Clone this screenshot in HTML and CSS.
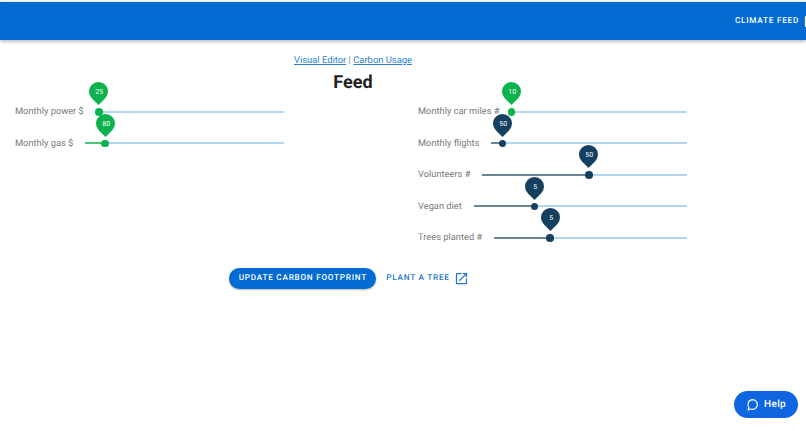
FILE: index.html
```html
<!DOCTYPE html>
<html lang="en">
<head>
    <meta charset="UTF-8">
    <meta name="viewport" content="width=device-width, initial-scale=1.0">
    <title>Feed</title>
    <link rel="stylesheet" href="styles.css">
</head>
<body>
    <header class="app-bar">
        <a class="app-link" href="#">
            Climate Feed
            <svg class="icon-open" viewBox="0 0 24 24"><path d="M19 19H5V5h7V3H5a2 2 0 0 0-2 2v14a2 2 0 0 0 2 2h14c1.1 0 2-.9 2-2v-7h-2v7zM14 3v2h3.59l-9.83 9.83 1.41 1.41L19 6.41V10h2V3h-7z"/></svg>
        </a>
    </header>
    <main class="page">
        <p class="nav-links"><a href="#">Visual Editor</a> | <a href="#">Carbon Usage</a></p>
        <h1 class="title">Feed</h1>
        <div class="columns">
            <div class="column">
                <div class="field">
                    <span class="field-label">Monthly power $</span>
                    <div class="slider green">
                        <div class="fill" style="width: 1.6%"></div>
                        <div class="thumb" style="left: 1.6%"><span class="pin"><span>25</span></span></div>
                    </div>
                </div>
                <div class="field">
                    <span class="field-label">Monthly gas $</span>
                    <div class="slider green">
                        <div class="fill" style="width: 10%"></div>
                        <div class="thumb" style="left: 10%"><span class="pin"><span>80</span></span></div>
                    </div>
                </div>
            </div>
            <div class="column">
                <div class="field">
                    <span class="field-label">Monthly car miles #</span>
                    <div class="slider green">
                        <div class="fill" style="width: 0%"></div>
                        <div class="thumb" style="left: 0%"><span class="pin"><span>10</span></span></div>
                    </div>
                </div>
                <div class="field">
                    <span class="field-label">Monthly flights</span>
                    <div class="slider">
                        <div class="fill" style="width: 5.6%"></div>
                        <div class="thumb" style="left: 5.6%"><span class="pin"><span>50</span></span></div>
                    </div>
                </div>
                <div class="field">
                    <span class="field-label">Volunteers #</span>
                    <div class="slider">
                        <div class="fill" style="width: 52%"></div>
                        <div class="thumb" style="left: 52%"><span class="pin"><span>50</span></span></div>
                    </div>
                </div>
                <div class="field">
                    <span class="field-label">Vegan diet</span>
                    <div class="slider">
                        <div class="fill" style="width: 28.5%"></div>
                        <div class="thumb" style="left: 28.5%"><span class="pin"><span>5</span></span></div>
                    </div>
                </div>
                <div class="field">
                    <span class="field-label">Trees planted #</span>
                    <div class="slider">
                        <div class="fill" style="width: 29%"></div>
                        <div class="thumb" style="left: 29%"><span class="pin"><span>5</span></span></div>
                    </div>
                </div>
            </div>
        </div>
        <div class="actions">
            <button type="button" class="btn-primary">Update Carbon Footprint</button>
            <a class="btn-text" href="#">
                Plant a Tree
                <svg class="icon-open" viewBox="0 0 24 24"><path d="M19 19H5V5h7V3H5a2 2 0 0 0-2 2v14a2 2 0 0 0 2 2h14c1.1 0 2-.9 2-2v-7h-2v7zM14 3v2h3.59l-9.83 9.83 1.41 1.41L19 6.41V10h2V3h-7z"/></svg>
            </a>
        </div>
    </main>
    <button type="button" class="help">
        <svg class="icon-help" viewBox="0 0 24 24"><path d="M12 3a9 9 0 0 1 0 18c-1.2 0-2.3-.2-3.3-.6L4 22l1.3-4.6A9 9 0 0 1 12 3z"/></svg>
        Help
    </button>
</body>
</html>
```

FILE: styles.css
```css
* {
    box-sizing: border-box;
}
html, body {
    height: 100%;
}
body {
    margin: 0;
    overflow: hidden;
    background: #fff;
    font-family: Roboto, "Liberation Sans", sans-serif;
    color: #7a7a7a;
    text-rendering: geometricPrecision;
}
a {
    color: #2a7fd4;
}
.app-bar {
    display: flex;
    justify-content: flex-end;
    align-items: center;
    height: 38px;
    margin-top: 2px;
    background: #036bd2;
    box-shadow: 0 1px 4px rgba(0, 0, 0, 0.35);
}
.app-link {
    display: flex;
    align-items: center;
    flex-shrink: 0;
    gap: 4px;
    margin-right: -12px;
    font-size: 8.2px;
    font-weight: 500;
    letter-spacing: 0.75px;
    text-transform: uppercase;
    text-decoration: none;
    color: #fff;
}
.icon-open {
    width: 15px;
    height: 15px;
    fill: currentColor;
}
.page {
    width: 706px;
}
.nav-links {
    margin: 14px 0 0;
    font-size: 9.4px;
    line-height: 13px;
    text-align: center;
}
.title {
    margin: 5px 0 0;
    font-size: 18px;
    line-height: 22px;
    font-weight: 700;
    text-align: center;
    color: #212121;
}
.columns {
    display: grid;
    grid-template-columns: 1fr 1fr;
    gap: 134px;
    margin-top: 2px;
    padding: 0 19px 0 15px;
}
.column {
    display: flex;
    flex-direction: column;
}
.field {
    display: flex;
    align-items: center;
    gap: 12px;
    height: 31.5px;
}
.field-label {
    font-size: 9.3px;
    white-space: nowrap;
}
.slider {
    position: relative;
    flex: 1;
    height: 2px;
    background: #b0d6f2;
}
.fill {
    height: 100%;
    background: #6a8598;
}
.thumb {
    position: absolute;
    top: 50%;
    width: 7.5px;
    height: 7.5px;
    margin: -3.75px 0 0 -3.75px;
    border-radius: 50%;
    background: #16405f;
}
.pin {
    position: absolute;
    left: 50%;
    bottom: 11px;
    display: flex;
    align-items: center;
    justify-content: center;
    width: 19px;
    height: 19px;
    margin-left: -9.5px;
    margin-bottom: 3.5px;
    border-radius: 50% 50% 50% 0;
    background: #16405f;
    transform: rotate(-45deg);
    font-size: 7px;
    color: #fff;
}
.pin span {
    transform: rotate(45deg);
}
.green .fill {
    background: #4cc57c;
}
.green .thumb, .green .pin {
    background: #0cb24c;
}
.actions {
    display: flex;
    justify-content: center;
    align-items: center;
    gap: 10px;
    margin-top: 14px;
    padding-right: 8px;
}
.btn-primary {
    height: 21px;
    width: 147px;
    padding: 0;
    border: 0;
    border-radius: 11px;
    background: #036bd2;
    box-shadow: 0 1px 2px rgba(0, 0, 0, 0.3);
    font-family: inherit;
    font-size: 8.2px;
    font-weight: 500;
    letter-spacing: 0.75px;
    text-transform: uppercase;
    text-rendering: geometricPrecision;
    color: #fff;
}
.btn-text {
    display: flex;
    align-items: center;
    gap: 4px;
    font-size: 8.2px;
    font-weight: 500;
    letter-spacing: 0.75px;
    text-transform: uppercase;
    text-decoration: none;
    color: #1a76d2;
}
.help {
    position: fixed;
    right: 8px;
    bottom: 13px;
    display: flex;
    align-items: center;
    justify-content: center;
    gap: 5px;
    width: 64px;
    height: 27px;
    padding: 0;
    border: 0;
    border-radius: 14px;
    background: #0d66e0;
    font-family: inherit;
    font-size: 10px;
    font-weight: 500;
    letter-spacing: 0.3px;
    text-rendering: geometricPrecision;
    color: #fff;
}
.icon-help {
    width: 13px;
    height: 13px;
    fill: none;
    stroke: #fff;
    stroke-width: 2.2;
}
```
